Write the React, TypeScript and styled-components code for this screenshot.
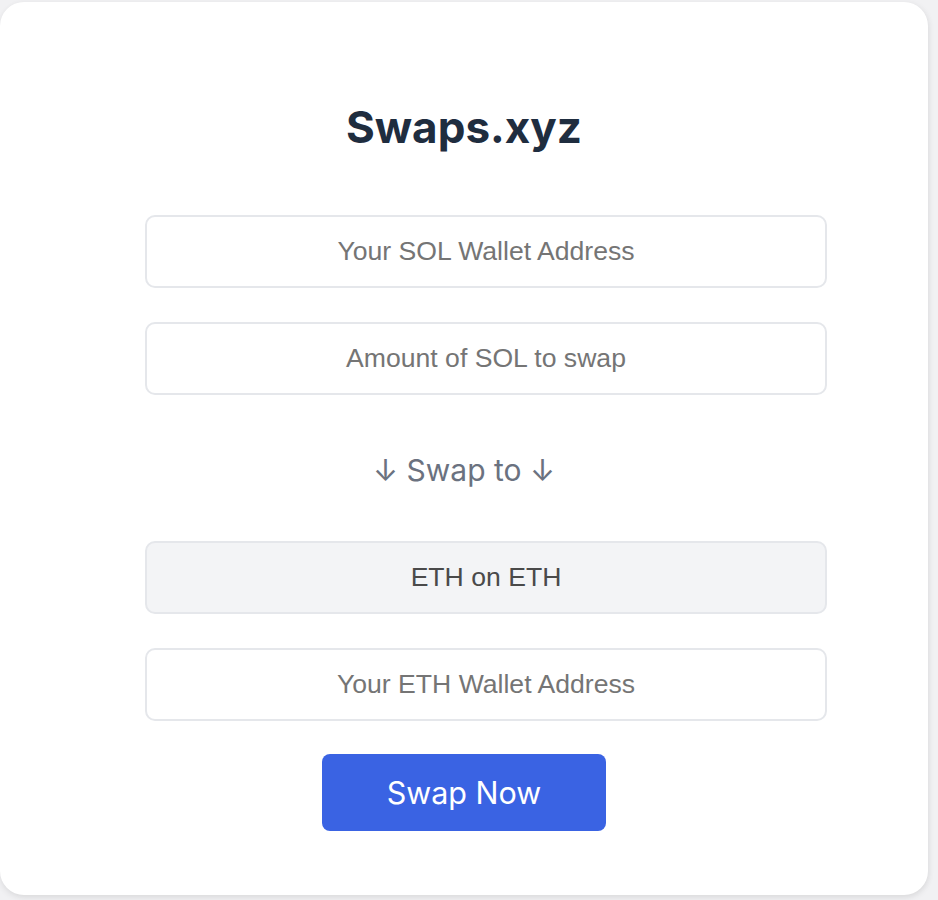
import React from 'react';
import styled, { createGlobalStyle } from 'styled-components';

const GlobalStyle = createGlobalStyle`
  body {
    margin: 0;
    background-color: #f1f1f3;
    font-family: Inter, "Liberation Sans", sans-serif;
  }
`;

const Page = styled.div`
  padding-top: 2px;
  height: 898px;
`;

const Card = styled.div`
  width: 928px;
  box-sizing: border-box;
  background-color: #ffffff;
  border-radius: 24px;
  padding: 64px 145px 64px;
  box-shadow: 0 3px 6px rgba(0, 0, 0, 0.08), 2px 0 6px rgba(0, 0, 0, 0.03);
  display: flex;
  flex-direction: column;
  align-items: center;
`;

const Title = styled.h1`
  color: #1f2d3f; /* dark slate */
  font-size: 44px;
  line-height: 54px;
  font-weight: 700;
  margin: 34px 0 61px;
`;

const Form = styled.div`
  width: 100%;
  display: flex;
  flex-direction: column;
  align-items: flex-start;
`;

const Field = styled.input<{ $filled?: boolean; $last?: boolean }>`
  /* content-box on purpose: padding pushes it past the column */
  width: 100%;
  height: 29px;
  padding: 20px;
  margin-bottom: ${(p) => (p.$last ? '0' : '34px')};
  border: 2px solid #e5e7eb;
  border-radius: 10px;
  font-family: "Liberation Sans", Arial, sans-serif;
  font-size: 26.6px;
  text-align: center;
  outline: none;
  color: ${(p) => (p.$filled ? '#4a4a4a' : '#222')};
  background-color: ${(p) => (p.$filled ? '#f3f4f6' : '#ffffff')};

  &::placeholder {
    color: #757575;
  }
`;

const SwapLabel = styled.p`
  align-self: center;
  color: #6b7280;
  font-size: 30px;
  line-height: 36px;
  margin: 57px 0 53px;
`;

const SwapButton = styled.button`
  align-self: center;
  margin-top: -1px;
  background-color: #3a63e3;
  color: #ffffff;
  border: none;
  border-radius: 8px;
  padding: 20px 65px;
  font-family: Inter, "Liberation Sans", sans-serif;
  font-size: 30.5px;
  line-height: 37px;
  cursor: pointer;
`;

const App = () => {
  return (
    <>
      <GlobalStyle />
      <Page>
        <Card>
          <Title>Swaps.xyz</Title>
          <Form>
            <Field placeholder="Your SOL Wallet Address" />
            <Field placeholder="Amount of SOL to swap" $last />
            <SwapLabel>↓ Swap to ↓</SwapLabel>
            <Field $filled readOnly value="ETH on ETH" />
            <Field placeholder="Your ETH Wallet Address" />
            <SwapButton>Swap Now</SwapButton>
          </Form>
        </Card>
      </Page>
    </>
  );
};

export default App;
